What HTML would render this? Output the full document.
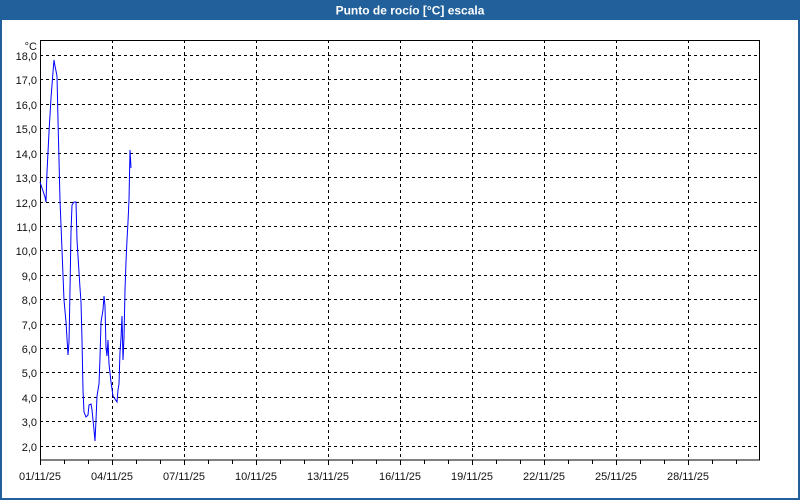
<!DOCTYPE html>
<html><head><meta charset="utf-8"><style>
html,body{margin:0;padding:0;background:#fff;}
body{width:800px;height:500px;overflow:hidden;position:relative;font-family:"Liberation Sans",sans-serif;}
</style></head><body>
<svg width="800" height="500" xmlns="http://www.w3.org/2000/svg" style="position:absolute;left:0;top:0">
<rect x="0" y="0" width="800" height="500" fill="#fff"/>
<rect x="0" y="0" width="800" height="20" fill="#21609a"/>
<rect x="0" y="20" width="2" height="480" fill="#21609a"/>
<rect x="798" y="20" width="2" height="480" fill="#21609a"/>
<rect x="0" y="498" width="800" height="2" fill="#21609a"/>
<text x="410" y="14.5" fill="#fff" font-size="12" font-weight="bold" text-anchor="middle" font-family="Liberation Sans, sans-serif">Punto de rocío [°C] escala</text>
<g stroke="#000" stroke-width="1" stroke-dasharray="3,3" shape-rendering="crispEdges">
<line x1="40" y1="55.5" x2="760" y2="55.5"/><line x1="40" y1="79.5" x2="760" y2="79.5"/><line x1="40" y1="104.5" x2="760" y2="104.5"/><line x1="40" y1="128.5" x2="760" y2="128.5"/><line x1="40" y1="153.5" x2="760" y2="153.5"/><line x1="40" y1="177.5" x2="760" y2="177.5"/><line x1="40" y1="202.5" x2="760" y2="202.5"/><line x1="40" y1="226.5" x2="760" y2="226.5"/><line x1="40" y1="250.5" x2="760" y2="250.5"/><line x1="40" y1="275.5" x2="760" y2="275.5"/><line x1="40" y1="299.5" x2="760" y2="299.5"/><line x1="40" y1="324.5" x2="760" y2="324.5"/><line x1="40" y1="348.5" x2="760" y2="348.5"/><line x1="40" y1="372.5" x2="760" y2="372.5"/><line x1="40" y1="397.5" x2="760" y2="397.5"/><line x1="40" y1="421.5" x2="760" y2="421.5"/><line x1="40" y1="446.5" x2="760" y2="446.5"/>
<line x1="112.5" y1="40" x2="112.5" y2="460"/><line x1="184.5" y1="40" x2="184.5" y2="460"/><line x1="256.5" y1="40" x2="256.5" y2="460"/><line x1="328.5" y1="40" x2="328.5" y2="460"/><line x1="400.5" y1="40" x2="400.5" y2="460"/><line x1="472.5" y1="40" x2="472.5" y2="460"/><line x1="544.5" y1="40" x2="544.5" y2="460"/><line x1="616.5" y1="40" x2="616.5" y2="460"/><line x1="688.5" y1="40" x2="688.5" y2="460"/>
</g>
<rect x="40.5" y="40.5" width="719" height="419.5" fill="none" stroke="#000" stroke-width="1" shape-rendering="crispEdges"/>
<polyline fill="none" stroke="#0000ff" stroke-width="1" points="40,182 42,188 45,197 46,202 47,172 49,132 51,98 53,72 54,60 55,66 57,76 58,120 60,200 62,250 64,300 66,322 68,355 69,342 70,290 71,232 72,205 74,202 76,202 77,240 79,272 80,288 81,302 82,340 83,390 84,412 86,417 88,415 89,405 91,404 92,410 94,430 95,441 96,420 97,396 99,384 100,358 101,322 103,310 104,296 105,306 106,348 107,356 108,340 109,364 111,382 113,396 115,399 117,402 118,390 119,384 120,352 121,338 122,316 123,360 124,338 125,290 126,262 127,240 128,222 129,200 130,150 131,168"/>
<g font-size="11" fill="#111" text-anchor="end" font-family="Liberation Sans, sans-serif">
<text x="37" y="50" font-size="11">°C</text>
<text x="37" y="60">18,0</text><text x="37" y="84">17,0</text><text x="37" y="109">16,0</text><text x="37" y="133">15,0</text><text x="37" y="158">14,0</text><text x="37" y="182">13,0</text><text x="37" y="207">12,0</text><text x="37" y="231">11,0</text><text x="37" y="255">10,0</text><text x="37" y="280">9,0</text><text x="37" y="304">8,0</text><text x="37" y="329">7,0</text><text x="37" y="353">6,0</text><text x="37" y="377">5,0</text><text x="37" y="402">4,0</text><text x="37" y="426">3,0</text><text x="37" y="451">2,0</text>
</g>
<g font-size="11" fill="#111" text-anchor="middle" font-family="Liberation Sans, sans-serif">
<text x="40" y="480">01/11/25</text><text x="112" y="480">04/11/25</text><text x="184" y="480">07/11/25</text><text x="256" y="480">10/11/25</text><text x="328" y="480">13/11/25</text><text x="400" y="480">16/11/25</text><text x="472" y="480">19/11/25</text><text x="544" y="480">22/11/25</text><text x="616" y="480">25/11/25</text><text x="688" y="480">28/11/25</text>
</g>
<g stroke="#000" shape-rendering="crispEdges">
<line x1="40.5" y1="460" x2="40.5" y2="465"/><line x1="64.5" y1="460" x2="64.5" y2="464"/><line x1="88.5" y1="460" x2="88.5" y2="464"/><line x1="112.5" y1="460" x2="112.5" y2="465"/><line x1="136.5" y1="460" x2="136.5" y2="464"/><line x1="160.5" y1="460" x2="160.5" y2="464"/><line x1="184.5" y1="460" x2="184.5" y2="465"/><line x1="208.5" y1="460" x2="208.5" y2="464"/><line x1="232.5" y1="460" x2="232.5" y2="464"/><line x1="256.5" y1="460" x2="256.5" y2="465"/><line x1="280.5" y1="460" x2="280.5" y2="464"/><line x1="304.5" y1="460" x2="304.5" y2="464"/><line x1="328.5" y1="460" x2="328.5" y2="465"/><line x1="352.5" y1="460" x2="352.5" y2="464"/><line x1="376.5" y1="460" x2="376.5" y2="464"/><line x1="400.5" y1="460" x2="400.5" y2="465"/><line x1="424.5" y1="460" x2="424.5" y2="464"/><line x1="448.5" y1="460" x2="448.5" y2="464"/><line x1="472.5" y1="460" x2="472.5" y2="465"/><line x1="496.5" y1="460" x2="496.5" y2="464"/><line x1="520.5" y1="460" x2="520.5" y2="464"/><line x1="544.5" y1="460" x2="544.5" y2="465"/><line x1="568.5" y1="460" x2="568.5" y2="464"/><line x1="592.5" y1="460" x2="592.5" y2="464"/><line x1="616.5" y1="460" x2="616.5" y2="465"/><line x1="640.5" y1="460" x2="640.5" y2="464"/><line x1="664.5" y1="460" x2="664.5" y2="464"/><line x1="688.5" y1="460" x2="688.5" y2="465"/><line x1="712.5" y1="460" x2="712.5" y2="464"/><line x1="736.5" y1="460" x2="736.5" y2="464"/>
</g>
</svg>
</body></html>
